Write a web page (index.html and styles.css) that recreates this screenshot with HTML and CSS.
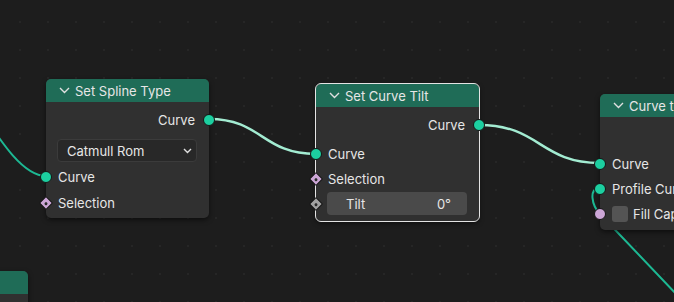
FILE: index.html
```html
<!DOCTYPE html>
<html lang="en">
<head>
  <meta charset="UTF-8" />
  <meta name="viewport" content="width=device-width, initial-scale=1" />
  <title>Node Editor</title>
  <link rel="stylesheet" href="styles.css">
</head>
<body>
  <div class="editor">
    <!-- links are drawn under the nodes -->
    <svg class="links" width="674" height="302" viewBox="0 0 674 302">
      <path class="link" d="M -86 44 C -41 44, 1 176, 46 176" />
      <path class="link link-active" d="M 209 119 C 262 119, 262 154, 316 154" />
      <path class="link link-active" d="M 479 125 C 540 125, 540 163, 600 163" />
      <path class="link" d="M 600 188 C 588 188, 592 205.6, 600 214 L 700 319" />
    </svg>

    <div class="node node-spline">
      <div class="node-header">
        <svg class="chevron" width="11" height="7" viewBox="0 0 11 7"><polyline points="1,1 5.5,5.5 10,1" /></svg>
        Set Spline Type
      </div>
      <div class="node-body">
        <div class="row row-out"><span>Curve</span><span class="socket socket-geo"></span></div>
        <div class="row row-widget row-gap">
          <div class="dropdown">
            <span>Catmull Rom</span>
            <svg class="dropdown-arrow" width="9" height="6" viewBox="0 0 9 6"><polyline points="1,1 4.5,4.5 8,1" /></svg>
          </div>
        </div>
        <div class="row row-in"><span class="socket socket-geo"></span><span>Curve</span></div>
        <div class="row row-in"><span class="socket socket-bool diamond"></span><span>Selection</span></div>
      </div>
    </div>

    <div class="node node-tilt selected">
      <div class="node-header">
        <svg class="chevron" width="11" height="7" viewBox="0 0 11 7"><polyline points="1,1 5.5,5.5 10,1" /></svg>
        Set Curve Tilt
      </div>
      <div class="node-body">
        <div class="row row-out"><span>Curve</span><span class="socket socket-geo"></span></div>
        <div class="row row-in inputs-start"><span class="socket socket-geo"></span><span>Curve</span></div>
        <div class="row row-in"><span class="socket socket-bool diamond"></span><span>Selection</span></div>
        <div class="row row-in row-widget">
          <span class="socket socket-float diamond"></span>
          <div class="number-field"><span>Tilt</span><span>0°</span></div>
        </div>
      </div>
    </div>

    <div class="node node-mesh">
      <div class="node-header">
        <svg class="chevron" width="11" height="7" viewBox="0 0 11 7"><polyline points="1,1 5.5,5.5 10,1" /></svg>
        Curve to Mesh
      </div>
      <div class="node-body">
        <div class="row row-out"><span>Mesh</span><span class="socket socket-geo"></span></div>
        <div class="row row-in inputs-start"><span class="socket socket-geo"></span><span>Curve</span></div>
        <div class="row row-in"><span class="socket socket-geo"></span><span>Profile Curve</span></div>
        <div class="row row-in">
          <span class="socket socket-bool"></span>
          <span class="checkbox"></span><span>Fill Caps</span>
        </div>
      </div>
    </div>

    <div class="node node-corner">
      <div class="node-header">Join Geometry</div>
      <div class="node-body"></div>
    </div>
  </div>
</body>
</html>
```

FILE: styles.css
```css
body {
  margin: 0;
  background: #1d1d1d;
  font-family: Inter, "Noto Sans", sans-serif;
  font-size: 13px;
  color: #e6e6e6;
}
.editor {
  position: relative;
  width: 674px;
  height: 302px;
  overflow: hidden;
  background-color: #1d1d1d;
  background-image: radial-gradient(circle, #262626 1px, transparent 1.2px);
  background-size: 28px 28px;
  background-position: 6px 8px;
}
.links {
  position: absolute;
  left: 0;
  top: 0;
}
.link {
  fill: none;
  stroke: #1db893;
  stroke-width: 2;
}
.link-active {
  stroke: #a3ecd2;
  stroke-width: 2.4;
}

/* nodes sit on a free canvas */
.node {
  position: absolute;
  width: 163px;
  background: #303030;
  border-radius: 5px;
  box-shadow: 0 2px 5px rgba(0, 0, 0, 0.55);
}
.node.selected {
  outline: 1px solid #e4e4e4;
}
.node-spline { left: 46px; top: 79px; }
.node-tilt { left: 316px; top: 84px; }
.node-mesh { left: 600px; top: 94px; }
.node-corner { left: -135px; top: 271px; height: 60px; }

.node-header {
  display: flex;
  align-items: center;
  gap: 5px;
  height: 23px;
  padding-left: 13px;
  background: #1f6c57;
  border-radius: 5px 5px 0 0;
  white-space: nowrap;
  overflow: hidden;
}
.chevron polyline,
.dropdown-arrow polyline {
  fill: none;
  stroke: #e0e0e0;
  stroke-width: 1.4;
}
.node-body {
  display: flex;
  flex-direction: column;
  padding: 5px 0 5px;
}
.node-spline .node-body {
  gap: 1px;
  padding-bottom: 3px;
}
.node-mesh .node-body {
  padding-bottom: 4px;
}
.row {
  position: relative;
  display: flex;
  align-items: center;
  height: 25px;
  padding: 0 14px 0 12px;
  white-space: nowrap;
}
.row-out {
  justify-content: flex-end;
}
.row-widget {
  padding: 0 12px 0 11px;
}
.row-gap {
  margin-top: 5px;
}
.inputs-start {
  margin-top: 4px;
}

/* sockets straddle the node edge */
.socket {
  position: absolute;
  top: 50%;
  width: 10px;
  height: 10px;
  margin-top: -6px;
  border: 1px solid #151515;
  border-radius: 50%;
}
.row-in .socket { left: -6px; }
.row-out .socket { right: -6px; }
.socket-geo { background: #1ccfa0; }
.socket-bool { background: #cca6d6; }
.socket-float { background: #a1a1a1; }
.socket.diamond {
  width: 8px;
  height: 8px;
  margin-top: -5px;
  left: -5px;
  border-radius: 1px;
  transform: rotate(45deg);
}
.socket.diamond::after {
  content: "";
  position: absolute;
  left: 2.5px;
  top: 2.5px;
  width: 3px;
  height: 3px;
  border-radius: 50%;
  background: #2a2a2a;
}

.dropdown {
  flex: 1;
  display: flex;
  align-items: center;
  justify-content: space-between;
  height: 21px;
  padding: 0 4px 0 9px;
  background: #282828;
  border: 1px solid #3b3b3b;
  border-radius: 4px;
}
.number-field {
  flex: 1;
  display: flex;
  align-items: center;
  justify-content: space-between;
  height: 23px;
  padding: 0 16px 0 19px;
  background: #4a4a4a;
  border-radius: 4px;
}
.checkbox {
  width: 16px;
  height: 16px;
  margin-right: 5px;
  background: #545454;
  border-radius: 3px;
}
```
